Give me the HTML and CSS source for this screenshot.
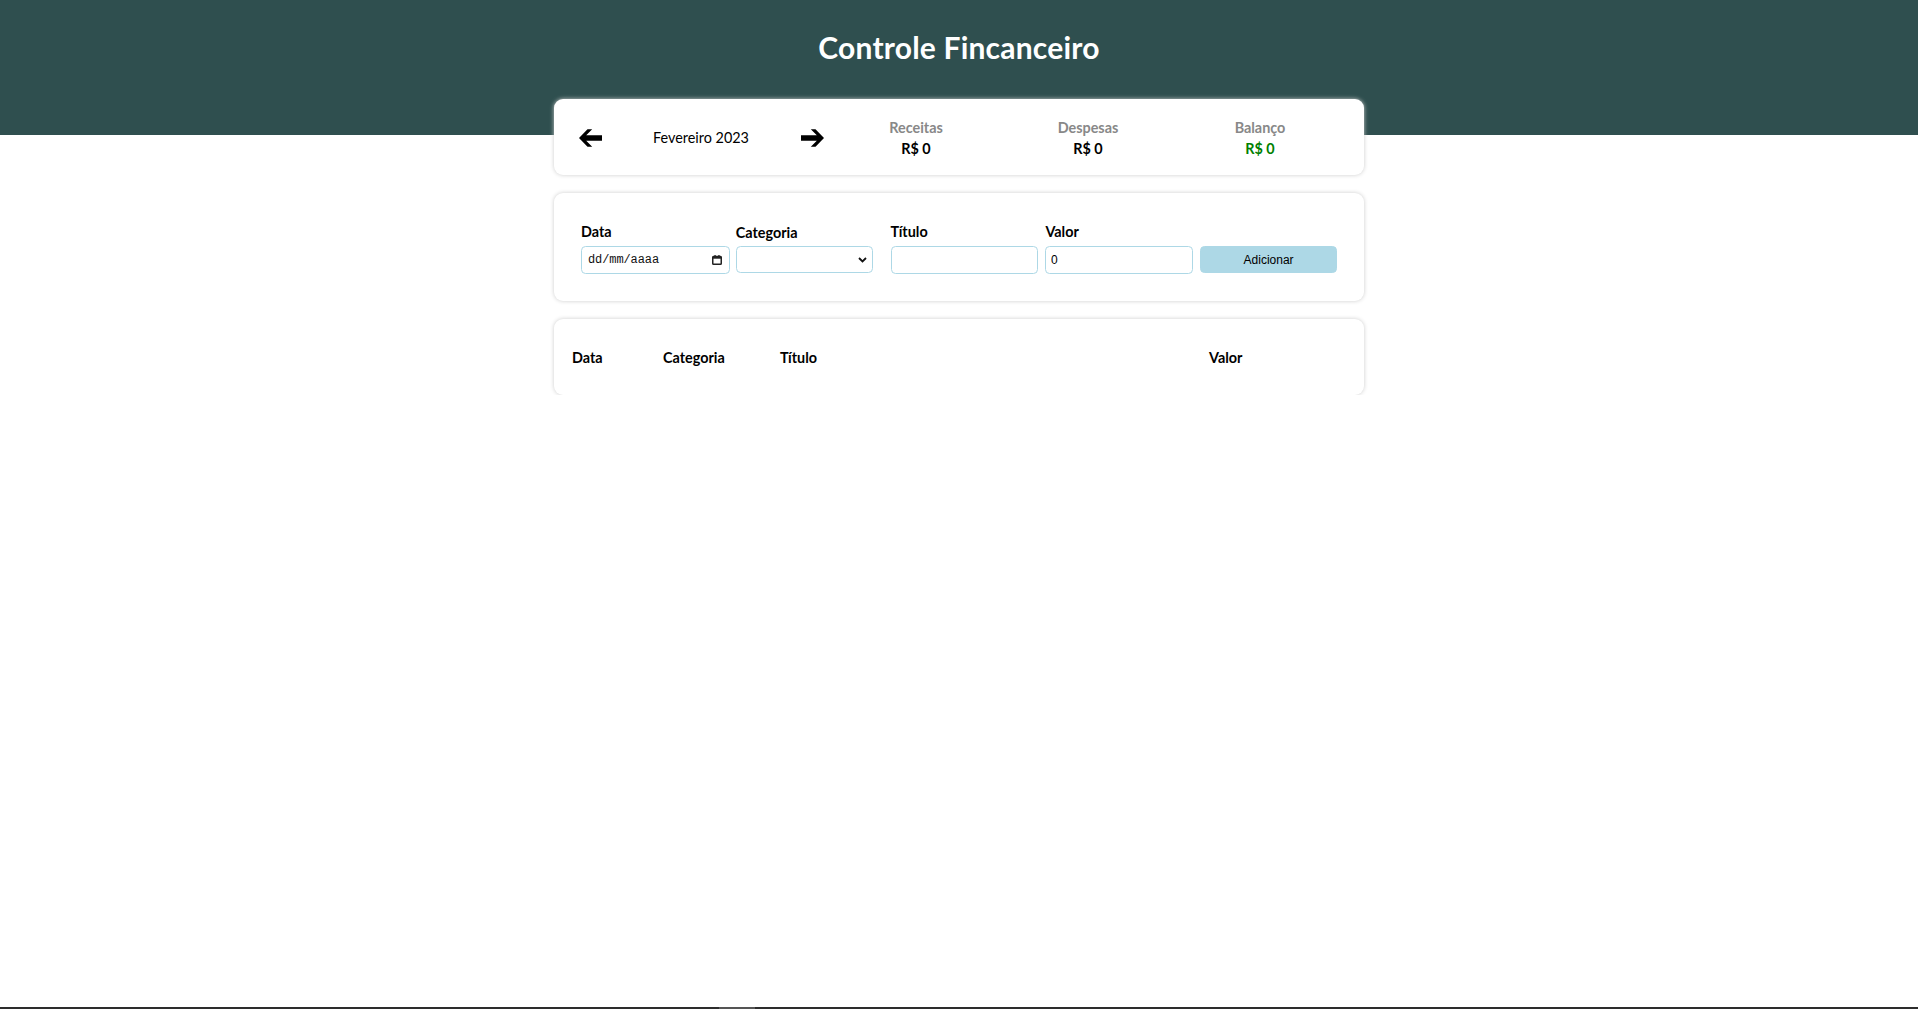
FILE: index.html
```html
<!DOCTYPE html>
<html lang="pt-BR">
<head>
<meta charset="utf-8">
<title>Controle Financeiro</title>
<link rel="stylesheet" href="styles.css">
</head>
<body>
<header class="header">
  <h1 class="header-title">Controle Fincanceiro</h1>
</header>
<main class="container">
  <section class="card info-area">
    <div class="month-area">
      <div class="month-arrow">
        <svg width="23" height="18" viewBox="0 0 23 18"><path d="M0 9 L8.5 0.3 L13.2 0.3 L7.2 6.2 L23 6.2 L23 11.8 L7.2 11.8 L13.2 17.7 L8.5 17.7 Z" fill="#000"/></svg>
      </div>
      <div class="month-title">Fevereiro 2023</div>
      <div class="month-arrow">
        <svg width="23" height="18" viewBox="0 0 23 18"><path d="M23 9 L14.5 0.3 L9.8 0.3 L15.8 6.2 L0 6.2 L0 11.8 L15.8 11.8 L9.8 17.7 L14.5 17.7 Z" fill="#000"/></svg>
      </div>
    </div>
    <div class="resume-area">
      <div class="resume-item">
        <div class="resume-title">Receitas</div>
        <div class="resume-info">R$ 0</div>
      </div>
      <div class="resume-item">
        <div class="resume-title">Despesas</div>
        <div class="resume-info">R$ 0</div>
      </div>
      <div class="resume-item">
        <div class="resume-title">Balanço</div>
        <div class="resume-info positive">R$ 0</div>
      </div>
    </div>
  </section>

  <section class="card input-area">
    <label class="input-label">
      <div class="input-title">Data</div>
      <div class="date-input">
        <span class="date-text">dd/mm/aaaa</span>
        <svg class="cal-icon" width="10" height="10" viewBox="0 0 10 10"><rect x="0.75" y="1.5" width="8.5" height="7.75" rx="0.8" fill="none" stroke="#222" stroke-width="1.5"/><rect x="0.75" y="1.5" width="8.5" height="2.2" fill="#222"/><rect x="2.4" y="0" width="1.3" height="2" fill="#222"/><rect x="6.3" y="0" width="1.3" height="2" fill="#222"/></svg>
      </div>
    </label>
    <label class="input-label">
      <div class="input-title">Categoria</div>
      <div class="select-box">
        <svg class="chevron" width="9" height="6" viewBox="0 0 9 6"><path d="M1 1 L4.5 4.5 L8 1" fill="none" stroke="#111" stroke-width="1.8"/></svg>
      </div>
    </label>
    <label class="input-label">
      <div class="input-title">Título</div>
      <input class="text-input" type="text">
    </label>
    <label class="input-label">
      <div class="input-title">Valor</div>
      <input class="text-input" type="text" value="0">
    </label>
    <label class="input-label">
      <div class="input-title">&nbsp;</div>
      <button class="add-button" type="button">Adicionar</button>
    </label>
  </section>

  <section class="card table-area">
    <table class="table">
      <thead>
        <tr>
          <th class="col-date">Data</th>
          <th class="col-cat">Categoria</th>
          <th>Título</th>
          <th class="col-value">Valor</th>
        </tr>
      </thead>
    </table>
  </section>
</main>
<div class="bottom-bar"><div class="bottom-thumb"></div></div>
</body>
</html>
```

FILE: styles.css
```css
* { box-sizing: content-box; }

body {
  margin: 0;
  padding: 0;
  font-family: Lato, "Noto Sans", Arial, sans-serif;
  font-size: 14.4px;
  color: #000;
  background: #fff;
}

.header {
  background: #2f4f4f;
  height: 135px;
  text-align: center;
}

.header-title {
  margin: 0;
  padding-top: 30px;
  color: #fff;
  font-size: 30px;
  font-weight: bold;
  line-height: 34.5px;
  letter-spacing: 0.2px;
}

.container {
  max-width: 810px;
  margin: 0 auto;
}

.card {
  background: #fff;
  box-shadow: 0 0 4.5px #ccc;
  border-radius: 9px;
  padding: 18px;
}

.info-area {
  margin-top: -36px;
  display: flex;
  align-items: center;
}

.month-area {
  flex: 1;
  display: flex;
  align-items: center;
  padding-top: 1px;
}

.month-arrow {
  width: 36px;
  display: flex;
  justify-content: center;
  align-items: center;
}

.month-title {
  flex: 1;
  text-align: center;
  line-height: 18px;
}

.resume-area {
  flex: 2;
  display: flex;
}

.resume-item {
  flex: 1;
  text-align: center;
}

.resume-title {
  font-weight: bold;
  color: #888;
  margin-bottom: 4px;
  line-height: 19px;
  padding-top: 1px;
}

.resume-info {
  font-weight: bold;
  color: #000;
  line-height: 16px;
}

.resume-info.positive {
  color: #008000;
}

.input-area {
  margin-top: 18px;
  display: flex;
  align-items: center;
}

.input-label {
  flex: 1;
  margin: 9px;
  min-width: 0;
}

.input-title {
  font-weight: bold;
  margin-bottom: 3.5px;
  line-height: 20px;
  padding-top: 2px;
}

.date-input,
.text-input {
  width: 100%;
  height: 26px;
  padding: 0 4.5px;
  border: 1px solid #add8e6;
  border-radius: 4.5px;
  background: #fff;
  display: block;
  margin: 0;
}

.date-input {
  display: flex;
  align-items: center;
  justify-content: space-between;
  padding: 0 7px 0 6px;
  width: calc(100% - 2.5px);
}

.date-text {
  font-family: "Liberation Mono", "DejaVu Sans Mono", monospace;
  font-size: 12px;
  color: #111;
  letter-spacing: -0.1px;
}

.cal-icon {
  flex: none;
}

.text-input {
  font-family: "Liberation Sans", Arial, sans-serif;
  font-size: 12px;
  color: #000;
  outline: none;
}

.select-box {
  box-sizing: border-box;
  width: 100%;
  height: 27px;
  border: 1px solid #add8e6;
  border-radius: 4.5px;
  background: #fff;
  display: flex;
  align-items: center;
  justify-content: flex-end;
  padding-right: 5px;
}

.add-button {
  box-sizing: border-box;
  width: 100%;
  height: 27px;
  padding: 0 4.5px;
  border: 1px solid #add8e6;
  border-radius: 4.5px;
  background: #add8e6;
  color: #000;
  font-family: "Liberation Sans", Arial, sans-serif;
  font-size: 12px;
  cursor: pointer;
  display: block;
}

.table-area {
  margin-top: 18px;
}

.table {
  width: 100%;
  border-spacing: 1.8px;
  margin-left: -1px;
}

.table th {
  text-align: left;
  padding: 10px 0 9px;
  font-weight: bold;
  line-height: 19px;
}

.col-date { width: 90px; }
.col-cat { width: 116px; }
.col-value { width: 135px; }

.bottom-bar {
  position: fixed;
  left: 0;
  right: 0;
  bottom: 0;
  height: 2px;
  background: #2d2d2d;
}

.bottom-thumb {
  position: absolute;
  left: 719px;
  width: 36px;
  top: 0;
  bottom: 0;
  background: #555;
}
```
